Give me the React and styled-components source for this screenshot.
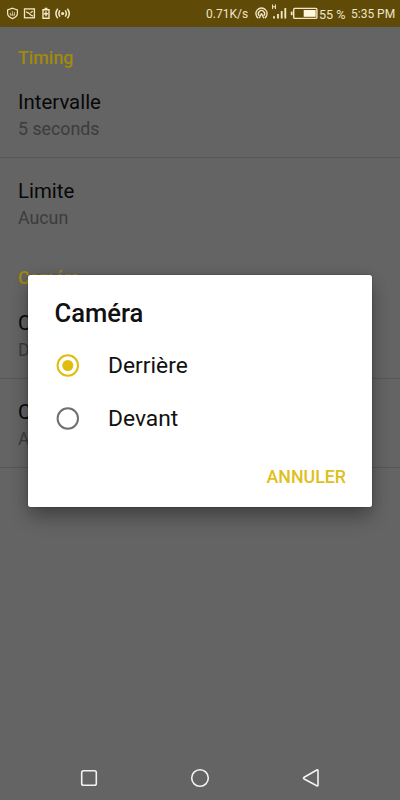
import React from 'react';
import styled, { createGlobalStyle } from 'styled-components';

const GlobalStyle = createGlobalStyle`
  *, *::before, *::after { box-sizing: border-box; }
  body { margin: 0; overflow: hidden; background: #646464; font-family: Roboto, sans-serif; }
`;

const Screen = styled.div`
  position: relative;
  width: 400px;
  height: 800px;
  display: flex;
  flex-direction: column;
  background: #646464;
  overflow: hidden;
`;

const StatusBar = styled.header`
  height: 27px;
  flex: none;
  display: flex;
  align-items: center;
  justify-content: space-between;
  padding: 0 5px 0 6px;
  background: #604a08;
  color: #eee4c4;
`;

const StatusIcons = styled.svg`
  display: block;
  flex: none;
  fill: none;
  stroke: #f3e8c4;
  stroke-width: 1.4;
`;

const StatusGroup = styled.div`
  display: flex;
  align-items: center;
`;

const StatusText = styled.span`
  width: ${({ $width }) => $width}px;
  margin-left: ${({ $gap }) => $gap || 0}px;
  font-size: ${({ $size }) => $size || 12.3}px;
  line-height: 27px;
  padding-top: 1px;
  white-space: nowrap;
`;

const Settings = styled.main`
  flex: 1;
`;

const SectionTitle = styled.h2`
  margin: 0;
  height: ${({ $height }) => $height}px;
  padding: 20px 18px 0;
  font-size: 17.8px;
  line-height: 22px;
  font-weight: 500;
  color: #a18a0c;
`;

const Preference = styled.div`
  height: 89px;
  padding: 20px 18px 0;
  border-bottom: 1px solid ${({ $divider }) => ($divider ? '#585858' : 'transparent')};
`;

const PreferenceTitle = styled.div`
  font-size: 20.4px;
  line-height: 26px;
  color: #080808;
`;

const PreferenceValue = styled.div`
  font-size: 17.8px;
  line-height: 27px;
  color: #3c3c3c;
`;

const NavBar = styled.nav`
  height: 44px;
  flex: none;
`;

const NavIcons = styled.svg`
  display: block;
  fill: none;
  stroke: #f2f2f2;
  stroke-width: 1.6;
  stroke-linejoin: round;
`;

const Dialog = styled.section`
  position: absolute;
  left: 27.5px;
  top: 275px;
  width: 344.5px;
  height: 232px;
  padding: 22px 26px 0 27px;
  display: flex;
  flex-direction: column;
  background: #fff;
  border-radius: 2.5px;
  box-shadow: 0 12px 20px -2px rgba(0, 0, 0, 0.28), 0 3px 16px rgba(0, 0, 0, 0.15), 0 0 2px rgba(0, 0, 0, 0.35);
`;

const DialogTitle = styled.h1`
  margin: 0 0 10px;
  font-size: 25.6px;
  line-height: 32px;
  font-weight: 500;
  color: #111;
`;

const Option = styled.div`
  height: 53px;
  display: flex;
  align-items: center;
  gap: 28.5px;
  padding-left: 1px;
  font-size: 22.8px;
  color: #111;
`;

const Radio = styled.svg`
  width: 24px;
  height: 24px;
  flex: none;
  fill: none;
  stroke: ${({ $checked }) => ($checked ? '#e0bc0c' : '#707070')};
  stroke-width: 2;
`;

const CancelButton = styled.button`
  align-self: flex-end;
  margin-top: 20px;
  padding: 0;
  border: 0;
  background: none;
  font: 500 17.8px/24px Roboto, sans-serif;
  color: #e0bf20;
`;

function RadioOption({ label, checked }) {
  return (
    <Option role="radio" aria-checked={checked}>
      <Radio $checked={checked} viewBox="0 0 24 24">
        <circle cx="11.8" cy="11.5" r="10.2" />
        {checked && <circle cx="11.8" cy="11.5" r="5.5" fill="#e0bc0c" stroke="none" />}
      </Radio>
      {label}
    </Option>
  );
}

function PreferenceRow({ title, value, divider }) {
  return (
    <Preference $divider={divider}>
      <PreferenceTitle>{title}</PreferenceTitle>
      <PreferenceValue>{value}</PreferenceValue>
    </Preference>
  );
}

function NotificationIcons() {
  return (
    <StatusIcons width="66" height="27" viewBox="6 0 66 27">
      <path d="M12.5 8.2 17.4 9.9v3.7c0 2.5-1.9 3.9-4.9 5-3-1.1-4.9-2.5-4.9-5V9.9z" strokeWidth="1.2" />
      <path d="M10.3 15v-2.2M12.4 15.2v-4M14.5 15v-2.8M10 15.1h5" strokeWidth=".9" opacity=".8" />
      <rect x="24.5" y="8.9" width="9.9" height="8.9" strokeWidth="1.3" />
      <path d="m26 11.8 2.6 1.3 2.2 1.9 2.3 1.1M30.5 12.8l2.2-1.5" strokeWidth="1.2" />
      <path d="M43 9.7h6v8.6h-6zM44.6 8.5h2.8M46 11.3v5M43.9 13.8h4.2" />
      <circle cx="62.6" cy="13.5" r="1.6" fill="#f3e8c4" stroke="none" />
      <path d="M60 10.4q-2.3 3.1 0 6.2M65.2 10.4q2.3 3.1 0 6.2M57.8 8.7q-3.8 4.8 0 9.6M67.4 8.7q3.8 4.8 0 9.6" strokeWidth="1.5" />
    </StatusIcons>
  );
}

function ConnectionIcons() {
  return (
    <StatusIcons width="64" height="27" viewBox="254 0 64 27">
      <path d="M258.2 18.1a5.6 5.6 0 1 1 6.6 0M259.3 15.9a3.1 3.1 0 1 1 4.4 0M261.5 13.2l-2.2 5.1M261.5 13.2l2.2 5.1" strokeWidth="1.3" />
      <path d="M272.6 4.5v4.6M275.4 4.5v4.6M272.6 6.8h2.8" strokeWidth="1" />
      <path d="M274 16.2v2.3M278 14v4.5M281.7 11v7.5M285.3 8v10.5" strokeWidth="1.8" />
      <rect x="293.7" y="8.4" width="23.2" height="10" rx="1" strokeWidth="1.4" />
      <path d="M291.7 11.6v3.6" strokeWidth="1.8" />
      <rect x="303.7" y="10" width="12" height="6.8" fill="#fff7df" stroke="none" />
    </StatusIcons>
  );
}

export default function App() {
  return (
    <>
      <GlobalStyle />
      <Screen>
        <StatusBar>
          <NotificationIcons />
          <StatusGroup>
            <StatusText $width={48} $size={12}>0.71K/s</StatusText>
            <ConnectionIcons />
            <StatusText $width={28} $gap={1} $size={12.6}>55 %</StatusText>
            <StatusText $width={44} $gap={4} $size={12}>5:35 PM</StatusText>
          </StatusGroup>
        </StatusBar>
        <Settings>
          <SectionTitle $height={42}>Timing</SectionTitle>
          <PreferenceRow title="Intervalle" value="5 seconds" divider />
          <PreferenceRow title="Limite" value="Aucun" />
          <SectionTitle $height={43}>Caméra</SectionTitle>
          <PreferenceRow title="C" value="D" divider />
          <PreferenceRow title="C" value="A" divider />
        </Settings>
        <NavBar>
          <NavIcons width="400" height="44" viewBox="0 756 400 44">
            <rect x="81.7" y="770.7" width="14.6" height="14.6" rx="1.8" />
            <circle cx="200" cy="778" r="8.3" />
            <path d="M304.2 777.2 316.8 770q1.2-.5 1.2.8v14.2q0 1.3-1.2.7L304.2 779q-1.4-.9 0-1.8z" />
          </NavIcons>
        </NavBar>
        <Dialog role="dialog" aria-label="Caméra">
          <DialogTitle>Caméra</DialogTitle>
          <RadioOption label="Derrière" checked />
          <RadioOption label="Devant" checked={false} />
          <CancelButton>ANNULER</CancelButton>
        </Dialog>
      </Screen>
    </>
  );
}
